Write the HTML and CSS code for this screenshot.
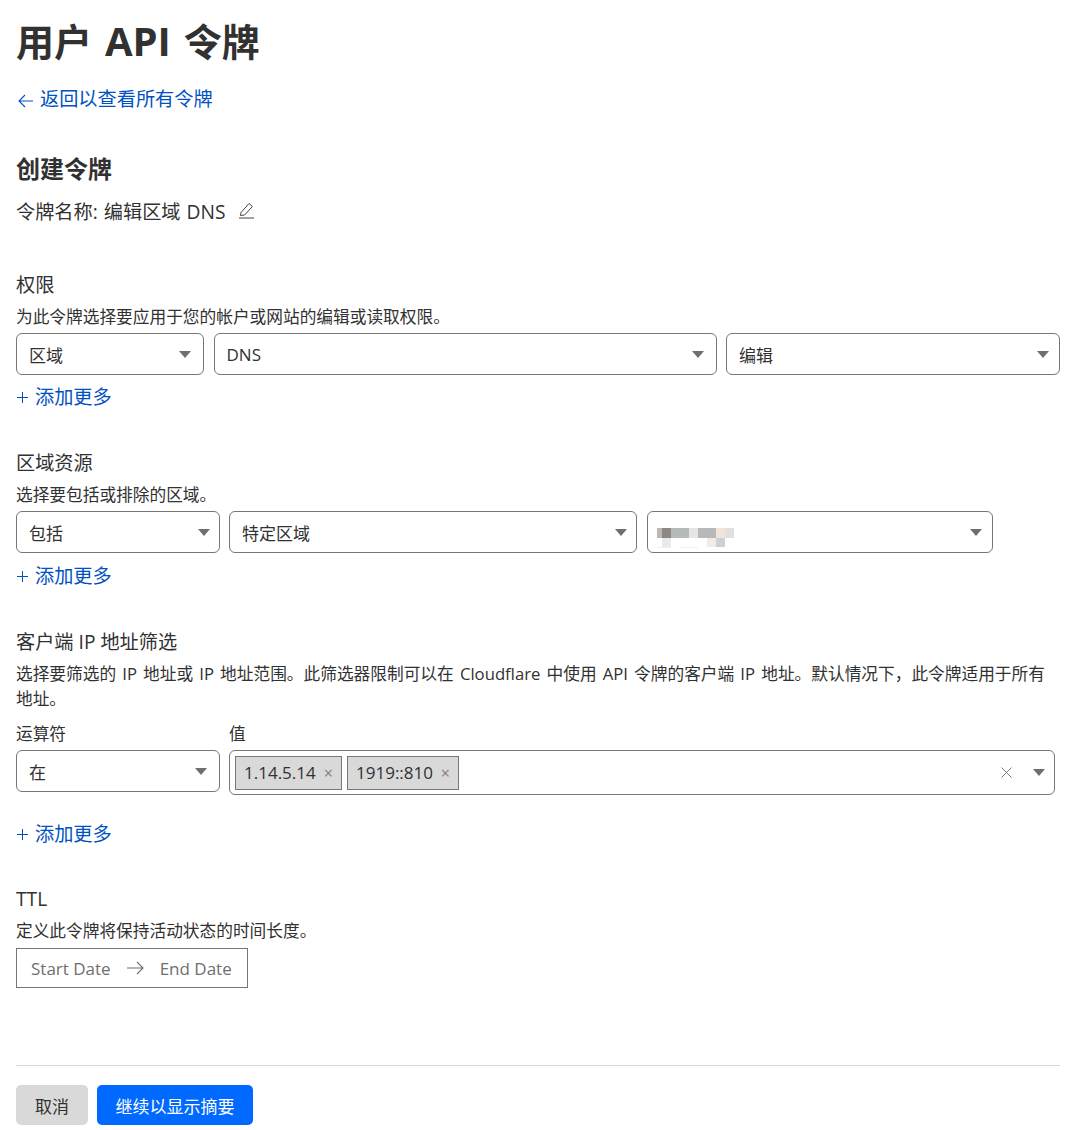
FILE: index.html
```html
<!DOCTYPE html>
<html>
<head>
  <title>用户 API 令牌</title>
  <link rel="stylesheet" href="styles.css">
</head>
<body>
  <h1>用户 <span class="h1-latin">API</span> 令牌</h1>
  <a class="back-link" href="#">
    <svg class="back-arrow" width="16" height="14" viewBox="0 0 16 14"><path d="M8 1 L2 7 L8 13 M2 7 H16" fill="none" stroke="currentColor" stroke-width="1.1"/></svg>
    返回以查看所有令牌
  </a>

  <h2>创建令牌</h2>
  <div class="token-name">
    令牌名称: 编辑区域 DNS
    <svg class="edit-icon" width="16" height="17" viewBox="0 0 16 17"><path d="M3 10.5 L11 1.5 L14.5 4.5 L6.5 13 L2.5 13.5 Z M1 16 H16" fill="none" stroke="#444" stroke-width="1"/></svg>
  </div>

  <section class="section section-perms">
    <h3>权限</h3>
    <p class="desc">为此令牌选择要应用于您的帐户或网站的编辑或读取权限。</p>
    <div class="row">
      <div class="select w-188">区域<span class="caret"></span></div>
      <div class="select w-503">DNS<span class="caret"></span></div>
      <div class="select w-334">编辑<span class="caret caret-mid"></span></div>
    </div>
    <a class="add-more" href="#"><svg class="plus" width="11" height="11" viewBox="0 0 11 11"><path d="M5.5 0 V11 M0 5.5 H11" stroke="currentColor" stroke-width="1"/></svg>添加更多</a>
  </section>

  <section class="section">
    <h3>区域资源</h3>
    <p class="desc">选择要包括或排除的区域。</p>
    <div class="row">
      <div class="select w-204">包括<span class="caret caret-near"></span></div>
      <div class="select w-408">特定区域<span class="caret caret-near"></span></div>
      <div class="select w-346">
        <svg class="blurred" width="78" height="21" viewBox="0 0 78 21">
          <rect x="0" y="0" width="5" height="10" fill="#bdb8b4"/>
          <rect x="5" y="0" width="9" height="10" fill="#8f8785"/>
          <rect x="14" y="0" width="18" height="10" fill="#b5baba"/>
          <rect x="32" y="0" width="9" height="10" fill="#e5e5e5"/>
          <rect x="41" y="0" width="18" height="10" fill="#b8b8b8"/>
          <rect x="59" y="0" width="9" height="10" fill="#f2e4dc"/>
          <rect x="68" y="0" width="9" height="10" fill="#e0e0e0"/>
          <rect x="5" y="10" width="9" height="9" fill="#eaeaea"/>
          <rect x="50" y="10" width="9" height="9" fill="#f2ece8"/>
          <rect x="59" y="10" width="9" height="9" fill="#cfd0d6"/>
          <rect x="0" y="19" width="14" height="1" fill="#eeeeee"/>
          <rect x="23" y="19" width="18" height="1" fill="#eeeeee"/>
        </svg>
        <span class="caret caret-mid"></span>
      </div>
    </div>
    <a class="add-more" href="#"><svg class="plus" width="11" height="11" viewBox="0 0 11 11"><path d="M5.5 0 V11 M0 5.5 H11" stroke="currentColor" stroke-width="1"/></svg>添加更多</a>
  </section>

  <section class="section">
    <h3>客户端 IP 地址筛选</h3>
    <p class="desc desc-wrap">选择要筛选的 IP 地址或 IP 地址范围。此筛选器限制可以在 Cloudflare 中使用 API 令牌的客户端 IP 地址。默认情况下，此令牌适用于所有地址。</p>
    <div class="row row-top">
      <div class="field w-204">
        <label>运算符</label>
        <div class="select">在<span class="caret"></span></div>
      </div>
      <div class="field w-826">
        <label>值</label>
        <div class="multi">
          <span class="tag">1.14.5.14<span class="tag-x">×</span></span>
          <span class="tag tag-second">1919::810<span class="tag-x">×</span></span>
          <svg class="clear-x" width="11" height="11" viewBox="0 0 11 11"><path d="M0.5 0.5 L10.5 10.5 M10.5 0.5 L0.5 10.5" stroke="#777" stroke-width="1"/></svg>
          <span class="caret caret-near"></span>
        </div>
      </div>
    </div>
    <a class="add-more add-more-ip" href="#"><svg class="plus" width="11" height="11" viewBox="0 0 11 11"><path d="M5.5 0 V11 M0 5.5 H11" stroke="currentColor" stroke-width="1"/></svg>添加更多</a>
  </section>

  <section class="section section-ttl">
    <h3>TTL</h3>
    <p class="desc">定义此令牌将保持活动状态的时间长度。</p>
    <div class="date-range">
      <span>Start Date</span>
      <svg width="17" height="14" viewBox="0 0 17 14"><path d="M10 1 L16 7 L10 13 M16 7 H0" fill="none" stroke="#6f6f6f" stroke-width="1.1"/></svg>
      <span>End Date</span>
    </div>
  </section>

  <div class="footer">
    <button class="btn btn-cancel">取消</button>
    <button class="btn btn-next">继续以显示摘要</button>
  </div>
</body>
</html>
```

FILE: styles.css
```css
* {
  box-sizing: border-box;
}

html, body {
  height: 1130px;
  overflow: hidden;
}

body {
  margin: 0;
  padding: 0 8px 0 16px;
  background-color: #fff;
  color: #313131;
  font-family: 'Open Sans', 'Noto Sans CJK SC', sans-serif;
  font-size: 17px;
}

h1 {
  margin: 0;
  height: 68px;
  padding-top: 16px;
  font-size: 38px;
  line-height: 50px;
  font-weight: 700;
  word-spacing: 3px;
}

.h1-latin {
  font-size: 40px;
}

.back-link {
  display: flex;
  align-items: center;
  gap: 6px;
  height: 28px;
  margin-top: 17px;
  font-size: 19.2px;
  line-height: 28px;
  color: #0051c3;
  text-decoration: none;
}

.back-arrow {
  margin-left: 1px;
  margin-right: 1px;
  margin-top: 4px;
}

h2 {
  margin: 38px 0 0;
  font-size: 24px;
  line-height: 36px;
  font-weight: 700;
}

.token-name {
  display: flex;
  align-items: center;
  gap: 13px;
  height: 28px;
  margin-top: 11px;
  font-size: 19.2px;
  line-height: 28px;
  word-spacing: 1px;
}

.edit-icon {
  margin-bottom: 4px;
}

.section {
  display: flex;
  flex-direction: column;
  margin-top: 39px;
}

.section-perms {
  margin-top: 46px;
}

.section-ttl {
  margin-top: 38px;
}

h3 {
  margin: 0;
  font-size: 19.2px;
  line-height: 26px;
  font-weight: 400;
}

.desc {
  margin: 7px 0 4px;
  font-size: 16.7px;
  line-height: 24px;
}

.desc-wrap {
  margin-top: 6px;
  line-height: 25px;
  word-spacing: 1.8px;
}

.row {
  display: flex;
  gap: 9.5px;
}

.row-top {
  align-items: flex-start;
  margin-top: 7px;
}

.select {
  position: relative;
  display: flex;
  align-items: center;
  height: 42px;
  padding-left: 12px;
  border: 1px solid #777;
  border-radius: 6px;
  background-color: #fff;
  font-size: 17px;
}

.caret {
  position: absolute;
  top: 17px;
  right: 12px;
  width: 0;
  height: 0;
  border-left: 6px solid transparent;
  border-right: 6px solid transparent;
  border-top: 7px solid #6f6f6f;
}

.caret-mid {
  right: 10px;
}

.caret-near {
  right: 9px;
}

.w-188 { width: 188px; }
.w-503 { width: 503px; }
.w-334 { width: 334px; }
.w-204 { width: 203.5px; }
.w-408 { width: 408px; }
.w-346 { width: 346px; padding-left: 9px; }
.w-826 { width: 826px; }

.blurred {
  margin-top: 12px;
}

.add-more {
  display: flex;
  align-items: center;
  gap: 7px;
  height: 28px;
  margin-top: 9px;
  font-size: 19.2px;
  line-height: 28px;
  color: #0051c3;
  text-decoration: none;
}

.section-perms .add-more {
  margin-top: 8px;
}

.plus {
  margin-left: 1px;
}

.add-more-ip {
  margin-top: 25px;
}

.field label {
  display: block;
  height: 24px;
  margin-bottom: 4px;
  font-size: 16.7px;
  line-height: 24px;
}

.multi {
  position: relative;
  display: flex;
  align-items: center;
  height: 45px;
  padding-left: 5px;
  border: 1px solid #777;
  border-radius: 6px;
}

.multi .caret {
  top: 18px;
}

.tag {
  display: flex;
  align-items: center;
  justify-content: space-between;
  width: 107px;
  height: 34px;
  padding: 0 8px;
  border: 1px solid #777;
  background-color: #d9d9d9;
  font-size: 17px;
}

.tag-second {
  width: 112px;
  margin-left: 5px;
}

.tag-x {
  font-size: 16px;
  color: #808080;
}

.clear-x {
  position: absolute;
  top: 16px;
  right: 42px;
}

.date-range {
  display: flex;
  align-items: center;
  gap: 16px;
  width: 232px;
  height: 40px;
  margin-top: 1px;
  padding-left: 14px;
  border: 1px solid #777;
  font-size: 17px;
  color: #6f6f6f;
}

.footer {
  display: flex;
  gap: 9px;
  margin-top: 77px;
  padding-top: 19px;
  border-top: 1px solid #d9d9d9;
}

.btn {
  height: 40px;
  padding: 0;
  border: none;
  border-radius: 5px;
  font-family: inherit;
  font-size: 17px;
}

.btn-cancel {
  width: 72px;
  background-color: #d9d9d9;
  color: #313131;
}

.btn-next {
  width: 156px;
  background-color: #0069ff;
  color: #fff;
}
```
